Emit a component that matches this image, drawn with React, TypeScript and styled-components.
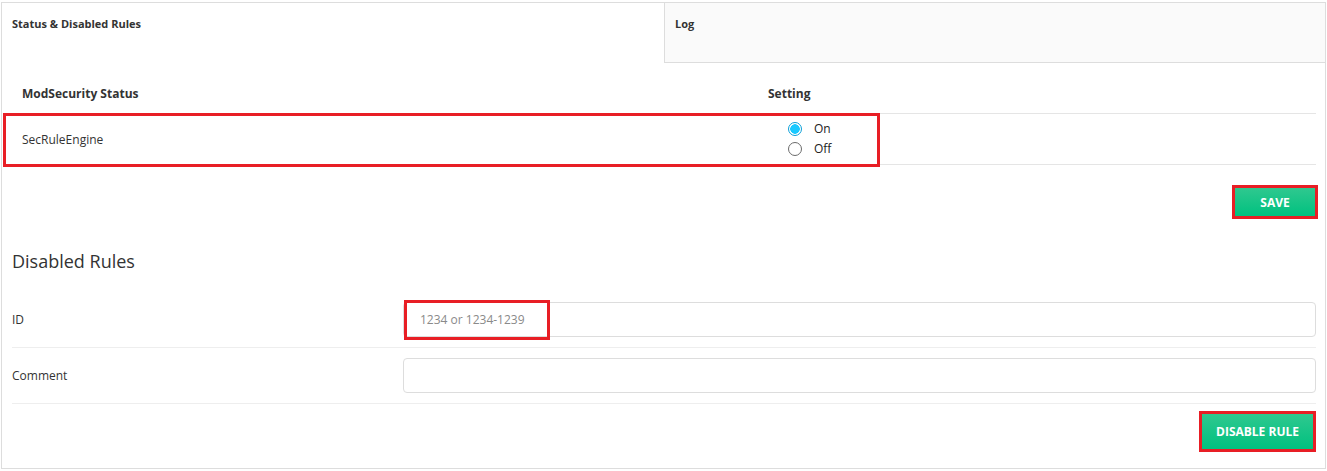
import styled, { createGlobalStyle } from "styled-components";

const GlobalStyle = createGlobalStyle`
  html, body {
    margin: 0;
    padding: 0;
    background: #ffffff;
  }
  body {
    font-family: "Open Sans", "Noto Sans", Arial, sans-serif;
    color: #333333;
    font-size: 12px;
  }
  * {
    box-sizing: border-box;
  }
`;

const MARK_RED = "#e81e25";

const Page = styled.div`
  padding: 2px 1px 0 1px;
`;

const Panel = styled.div`
  border: 1px solid #dddddd;
  background: #ffffff;
`;

const Tabs = styled.div`
  display: grid;
  grid-template-columns: 662px 1fr;
  height: 60px;
`;

const Tab = styled.div<{ $active?: boolean }>`
  padding: 13px 10px 0 10px;
  font-size: 11px;
  font-weight: 700;
  line-height: 15px;
  color: #333333;
  background: ${({ $active }) => ($active ? "#ffffff" : "#fafafa")};
  border-left: ${({ $active }) => ($active ? "none" : "1px solid #dddddd")};
  border-bottom: ${({ $active }) => ($active ? "none" : "1px solid #dddddd")};
`;

const Body = styled.div`
  padding: 0 9px 19px 10px;
`;

const StatusTable = styled.div`
  margin-top: 10px;
`;

const TableRow = styled.div<{ $head?: boolean }>`
  position: relative;
  display: grid;
  grid-template-columns: 746px 1fr;
  align-items: center;
  height: ${({ $head }) => ($head ? "41px" : "51px")};
  border-bottom: 1px solid #e5e5e5;
  font-weight: ${({ $head }) => ($head ? 700 : 400)};
`;

const Cell = styled.div`
  padding: 0 10px;
`;

const RadioGroup = styled.div`
  display: flex;
  flex-direction: column;
  padding-left: 20px;
`;

const RadioLabel = styled.label`
  display: flex;
  align-items: center;
  gap: 12px;
  height: 20px;
  line-height: 20px;
  color: #222222;
`;

const Radio = styled.input.attrs({ type: "radio" })`
  appearance: none;
  margin: 0;
  width: 14px;
  height: 14px;
  border-radius: 50%;
  border: 1.5px solid #6b6b6b;
  background: #ffffff;
  display: inline-block;

  &:checked {
    border-color: #0a9fd8;
    background: radial-gradient(circle, #1ac9ff 0 4.5px, #ffffff 5px);
  }
`;

const RowMark = styled.div`
  position: absolute;
  top: -1px;
  left: -9px;
  width: 877px;
  height: 54px;
  border: 3px solid ${MARK_RED};
  pointer-events: none;
`;

const ButtonBar = styled.div<{ $top: number; $right?: number }>`
  display: flex;
  justify-content: flex-end;
  margin-top: ${({ $top }) => $top}px;
  padding-right: ${({ $right = 1 }) => $right}px;
`;

const GreenButton = styled.button<{ $w: number; $h: number }>`
  width: ${({ $w }) => $w}px;
  height: ${({ $h }) => $h}px;
  padding: 0;
  border: none;
  border-radius: 0;
  outline: 3px solid ${MARK_RED};
  background: linear-gradient(#2fc88f, #00c17f);
  color: #ffffff;
  font-family: "Open Sans", Arial, sans-serif;
  font-size: 12px;
  font-weight: 700;
  text-transform: uppercase;
  cursor: pointer;
`;

const SectionTitle = styled.h3`
  margin: 35px 0 0 0;
  font-size: 18px;
  font-weight: 400;
  line-height: 20px;
  color: #333333;
`;

const Form = styled.div`
  margin-top: 21px;
`;

const FormRow = styled.div`
  display: grid;
  grid-template-columns: 391px 1fr;
  align-items: center;
  padding: 10px 0;
  border-bottom: 1px solid #eeeeee;
`;

const FieldWrap = styled.div`
  position: relative;
`;

const TextField = styled.input`
  width: 100%;
  height: 35px;
  padding: 0 16px;
  border: 1px solid #dddddd;
  border-radius: 4px;
  font-family: "Open Sans", Arial, sans-serif;
  font-size: 12px;
  color: #333333;

  &::placeholder {
    color: #8a8a8a;
  }
  &:focus {
    outline: none;
  }
`;

const FieldMark = styled.div`
  position: absolute;
  top: -2px;
  left: 1px;
  width: 146px;
  height: 40px;
  border: 3px solid ${MARK_RED};
  pointer-events: none;
`;

export default function App() {
  return (
    <>
      <GlobalStyle />
      <Page>
        <Panel>
          <Tabs>
            <Tab $active>Status &amp; Disabled Rules</Tab>
            <Tab>Log</Tab>
          </Tabs>
          <Body>
            <StatusTable>
              <TableRow $head>
                <Cell>ModSecurity Status</Cell>
                <Cell>Setting</Cell>
              </TableRow>
              <TableRow>
                <Cell>SecRuleEngine</Cell>
                <Cell>
                  <RadioGroup>
                    <RadioLabel>
                      <Radio name="engine" defaultChecked />
                      On
                    </RadioLabel>
                    <RadioLabel>
                      <Radio name="engine" />
                      Off
                    </RadioLabel>
                  </RadioGroup>
                </Cell>
                <RowMark />
              </TableRow>
            </StatusTable>

            <ButtonBar $top={23}>
              <GreenButton $w={80} $h={28}>Save</GreenButton>
            </ButtonBar>

            <SectionTitle>Disabled Rules</SectionTitle>

            <Form>
              <FormRow>
                <span>ID</span>
                <FieldWrap>
                  <TextField placeholder="1234 or 1234-1239" />
                  <FieldMark />
                </FieldWrap>
              </FormRow>
              <FormRow>
                <span>Comment</span>
                <FieldWrap>
                  <TextField />
                </FieldWrap>
              </FormRow>
            </Form>

            <ButtonBar $top={10} $right={3}>
              <GreenButton $w={111} $h={35}>Disable Rule</GreenButton>
            </ButtonBar>
          </Body>
        </Panel>
      </Page>
    </>
  );
}
